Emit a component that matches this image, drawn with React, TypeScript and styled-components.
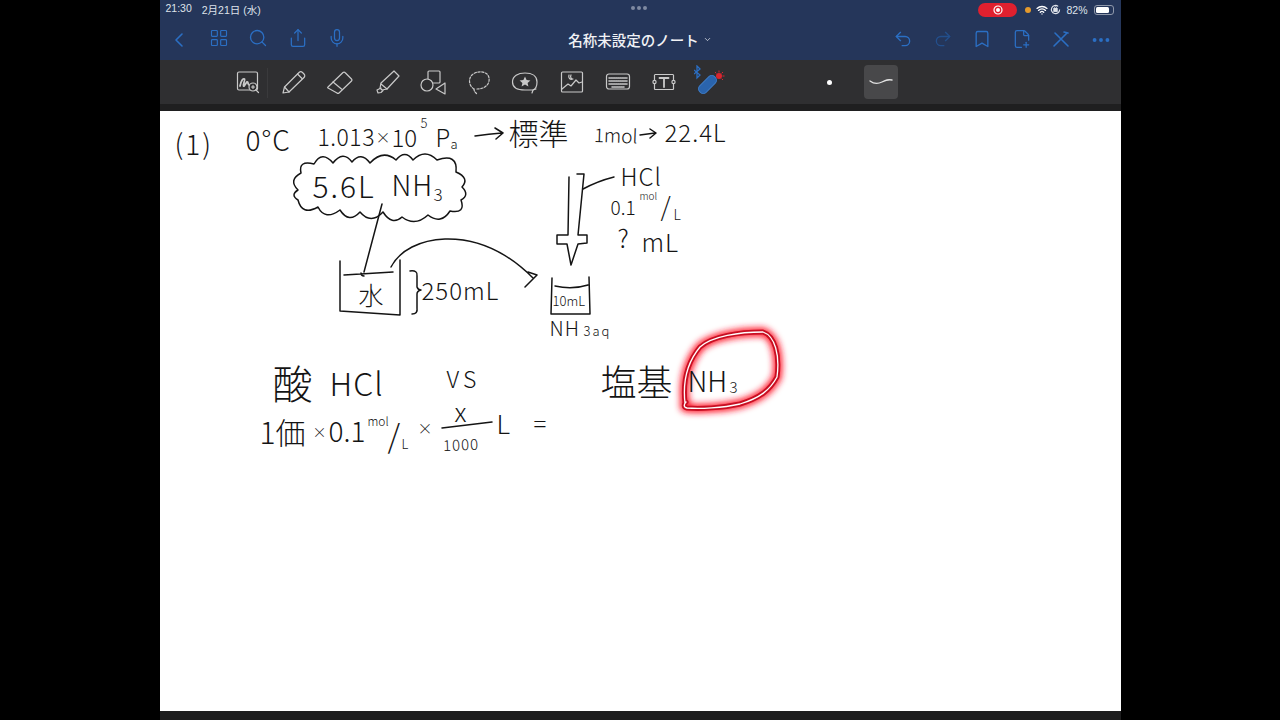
import React from 'react';
import styled, { createGlobalStyle } from 'styled-components';
import { ChevronLeft, ChevronDown, LayoutGrid, Search, Share, Mic, Undo2, Redo2, Bookmark, FilePlus2, Ellipsis, Wifi } from 'lucide-react';

const GlobalStyle = createGlobalStyle`
    html, body { margin: 0; height: 100%; background: #000; overflow: hidden; }
    #root { height: 100%; }
`;

const Page = styled.div`
    height: 720px;
    display: flex;
    justify-content: center;
    background: #000;
    font-family: "Noto Sans CJK JP", "Liberation Sans", sans-serif;
`;

const Tablet = styled.div`
    width: 961px;
    display: flex;
    flex-direction: column;
`;

const Header = styled.header`
    background: #25365a;
`;

const StatusBar = styled.div`
    position: relative;
    height: 19px;
    padding: 0 7px 0 6px;
    display: flex;
    align-items: center;
    justify-content: space-between;
    color: #dfe3ea;
    font: 10.5px "Liberation Sans", sans-serif;
`;

const Clock = styled.div`
    display: flex;
    gap: 10px;
    font-family: "Liberation Sans", "Noto Sans CJK JP", sans-serif;
`;

const GrabDots = styled.div`
    position: absolute;
    left: 471px;
    top: 6px;
    display: flex;
    gap: 2px;
    i { width: 4px; height: 4px; border-radius: 50%; background: #7f8aa1; }
`;

const StatusRight = styled.div`
    display: flex;
    align-items: center;
    gap: 5px;
`;

const RecordPill = styled.div`
    width: 39px;
    height: 14px;
    margin-right: 3px;
    border-radius: 7px;
    background: #e0202f;
    display: flex;
    align-items: center;
    justify-content: center;
`;

const OrangeDot = styled.span`
    width: 6px;
    height: 6px;
    border-radius: 50%;
    background: #e49a2c;
`;

const WifiMark = styled(Wifi)`
    margin-right: -3px;
`;

const Battery = styled.div`
    width: 20px;
    height: 10px;
    margin-left: 1px;
    padding: 1px;
    box-sizing: border-box;
    border: 1px solid #8f98aa;
    border-radius: 3px;
    &::before {
        content: '';
        display: block;
        width: 82%;
        height: 100%;
        border-radius: 1.5px;
        background: #fff;
    }
`;

const NavBar = styled.nav`
    height: 41px;
    display: grid;
    grid-template-columns: 1fr auto 1fr;
    align-items: center;
    color: #2b6fc4;
`;

const NavGroup = styled.div<{ $end?: boolean }>`
    display: flex;
    justify-content: ${p => (p.$end ? 'flex-end' : 'flex-start')};
`;

const NavButton = styled.div<{ $dim?: boolean }>`
    width: 39.5px;
    display: flex;
    justify-content: center;
    color: ${p => (p.$dim ? '#234f8c' : '#2b6fc4')};
`;

const Title = styled.div`
    display: flex;
    align-items: center;
    gap: 4px;
    color: #f1f2f5;
    font-size: 14.5px;
    font-weight: 500;
`;

const ToolBar = styled.div`
    height: 44px;
    padding-left: 65px;
    display: flex;
    align-items: center;
    background: #2f2f31;
    color: #c9c9c9;
`;

const Tool = styled.div<{ $divider?: boolean }>`
    position: relative;
    width: 46.3px;
    height: 44px;
    display: flex;
    align-items: center;
    justify-content: center;
    &::after {
        content: '';
        display: ${p => (p.$divider ? 'block' : 'none')};
        position: absolute;
        right: 3px;
        top: 8px;
        bottom: 6px;
        width: 1px;
        background: #3a3a3c;
    }
`;

const PenDot = styled.span`
    width: 5px;
    height: 5px;
    margin-left: 93px;
    border-radius: 50%;
    background: #fff;
`;

const PenWidth = styled.div`
    width: 34px;
    height: 34px;
    margin-left: 32px;
    border-radius: 4px;
    background: #48484a;
    display: flex;
    align-items: center;
    justify-content: center;
`;

const Shade = styled.div`
    height: 7px;
    background: #1f1f20;
`;

const Canvas = styled.main`
    position: relative;
    flex: 1;
    overflow: hidden;
    background: #fff;
`;

const Sketch = styled.svg`
    position: absolute;
    inset: 0;
    width: 100%;
    height: 100%;
    fill: none;
    stroke: #141414;
    stroke-width: 1.5;
    stroke-linecap: round;
    stroke-linejoin: round;
`;

const Ink = styled.span<{ $x: number; $y: number; $size: number; $rot?: number; $gap?: number }>`
    position: absolute;
    left: ${p => p.$x - 160}px;
    top: ${p => p.$y - 111}px;
    color: #141414;
    font-family: "Noto Sans CJK JP", "Open Sans", sans-serif;
    font-size: ${p => p.$size}px;
    font-weight: 300;
    line-height: 1;
    letter-spacing: ${p => p.$gap ?? 0}px;
    white-space: nowrap;
    transform: rotate(${p => p.$rot ?? 0}deg);
    transform-origin: left center;
`;

const BottomBar = styled.div`
    height: 9px;
    background: #1d1d1e;
`;

const Stroke = { fill: 'none', stroke: 'currentColor', strokeWidth: 1.2, strokeLinecap: 'round', strokeLinejoin: 'round' } as const;

const Icon = ({ children, size = 28 }: { children: React.ReactNode; size?: number }): JSX.Element => (
    <svg width={size} height={size} viewBox="0 0 28 28" {...Stroke}>{children}</svg>
);

const inkItems: Array<{ t: string; x: number; y: number; s: number; r?: number; g?: number }> = [
    { t: '(1)', x: 175, y: 129, s: 28, g: 2 },
    { t: '0°C', x: 246, y: 125, s: 28, g: 1 },
    { t: '1.013', x: 318, y: 125, s: 23, g: 0.5 },
    { t: '×', x: 376, y: 129, s: 15 },
    { t: '10', x: 392, y: 125, s: 24 },
    { t: '5', x: 421, y: 116, s: 13 },
    { t: 'P', x: 436, y: 125, s: 24 },
    { t: 'a', x: 451, y: 137, s: 13 },
    { t: '標準', x: 509, y: 117, s: 30 },
    { t: '1mol', x: 594, y: 124, s: 19, r: 2 },
    { t: '22.4L', x: 665, y: 120, s: 24, g: 1 },
    { t: '5.6L', x: 313, y: 170, s: 30, g: 2 },
    { t: 'NH', x: 392, y: 170, s: 28, g: 1 },
    { t: '3', x: 434, y: 185, s: 17 },
    { t: '水', x: 359, y: 282, s: 25 },
    { t: '250mL', x: 422, y: 278, s: 24, g: 1 },
    { t: '10mL', x: 553, y: 294, s: 13 },
    { t: 'NH', x: 550, y: 318, s: 20, g: 1 },
    { t: '3aq', x: 584, y: 324, s: 13, g: 2 },
    { t: 'HCl', x: 621, y: 164, s: 24, g: 1 },
    { t: '0.1', x: 611, y: 197, s: 19 },
    { t: 'mol', x: 640, y: 191, s: 10 },
    { t: '/', x: 661, y: 192, s: 26 },
    { t: 'L', x: 674, y: 207, s: 14 },
    { t: '?', x: 618, y: 225, s: 25 },
    { t: 'mL', x: 642, y: 229, s: 25, g: 1 },
    { t: '酸', x: 273, y: 362, s: 40 },
    { t: 'HCl', x: 330, y: 366, s: 32, g: 1 },
    { t: 'VS', x: 447, y: 367, s: 23, g: 4 },
    { t: '1価', x: 260, y: 416, s: 30 },
    { t: '×', x: 313, y: 424, s: 14 },
    { t: '0.1', x: 329, y: 416, s: 28 },
    { t: 'mol', x: 368, y: 415, s: 12 },
    { t: '/', x: 388, y: 418, s: 32 },
    { t: 'L', x: 402, y: 437, s: 13 },
    { t: '×', x: 418, y: 420, s: 15 },
    { t: 'x', x: 455, y: 398, s: 26 },
    { t: '1000', x: 443, y: 437, s: 15, g: 1, r: -2 },
    { t: 'L', x: 497, y: 410, s: 26 },
    { t: '=', x: 534, y: 411, s: 24 },
    { t: '塩基', x: 601, y: 362, s: 36 },
    { t: 'NH', x: 688, y: 366, s: 28 },
    { t: '3', x: 730, y: 379, s: 15 }
];

const ringPath = 'M685 403C683 385 685 365 700 347 712 336 740 332 763 332 775 336 780 355 777 377 770 390 760 398 740 404 722 408 700 409 687 408 683 407 684 404 686 402';

const App = (): JSX.Element => (
    <Page>
        <GlobalStyle />
        <Tablet>
            <Header>
                <StatusBar>
                    <Clock><span>21:30</span><span>2月21日 (水)</span></Clock>
                    <GrabDots><i /><i /><i /></GrabDots>
                    <StatusRight>
                        <RecordPill>
                            <svg width="12" height="12" viewBox="0 0 12 12">
                                <circle cx="6" cy="6" r="4" fill="none" stroke="#fff" strokeWidth="1.2" />
                                <circle cx="6" cy="6" r="2" fill="#fff" />
                            </svg>
                        </RecordPill>
                        <OrangeDot />
                        <WifiMark size={12} strokeWidth={2.6} color="#fff" />
                        <svg width="11" height="11" viewBox="0 0 12 12" fill="none" stroke="#dfe3ea" strokeWidth="1.2">
                            <path d="M10.5 6a4.5 4.5 0 1 1-1.6-3.4" />
                            <rect x="4.2" y="5" width="3.6" height="3" fill="#dfe3ea" />
                            <path d="M4.9 5V4a1.1 1.1 0 0 1 2.2 0v1" strokeWidth="0.8" />
                        </svg>
                        <span>82%</span>
                        <Battery />
                    </StatusRight>
                </StatusBar>
                <NavBar>
                    <NavGroup>
                        <NavButton><ChevronLeft size={24} strokeWidth={1.6} /></NavButton>
                        <NavButton><LayoutGrid size={20} strokeWidth={1.4} /></NavButton>
                        <NavButton><Search size={20} strokeWidth={1.6} /></NavButton>
                        <NavButton><Share size={20} strokeWidth={1.5} /></NavButton>
                        <NavButton><Mic size={20} strokeWidth={1.5} /></NavButton>
                    </NavGroup>
                    <Title>名称未設定のノート <ChevronDown size={9} strokeWidth={2} color="#dfe3ea" /></Title>
                    <NavGroup $end>
                        <NavButton><Undo2 size={20} strokeWidth={1.6} /></NavButton>
                        <NavButton $dim><Redo2 size={20} strokeWidth={1.6} /></NavButton>
                        <NavButton><Bookmark size={20} strokeWidth={1.6} /></NavButton>
                        <NavButton><FilePlus2 size={20} strokeWidth={1.5} /></NavButton>
                        <NavButton>
                            <svg width="20" height="20" viewBox="0 0 20 20" fill="none" stroke="currentColor" strokeWidth="1.6" strokeLinecap="round">
                                <path d="M3 17 16 4M4 4l13 13M13 3l4 1" />
                            </svg>
                        </NavButton>
                        <NavButton><Ellipsis size={22} strokeWidth={2.2} /></NavButton>
                    </NavGroup>
                </NavBar>
            </Header>
            <ToolBar>
                <Tool $divider>
                    <Icon>
                        <rect x="3.5" y="4" width="20" height="18" rx="1.5" />
                        <path d="M6 18c1-5 3-8 4.500-7 1 1-2 6-1 7s3-5 4-4 0 3 2 3" strokeWidth="1.8" />
                        <circle cx="19" cy="19" r="4" fill="#2f2f31" />
                        <path d="M22 22l2.500 2.500M17.500 19h3M19 17.500v3" />
                    </Icon>
                </Tool>
                <Tool>
                    <Icon>
                        <path d="M3 25l1.500-6L19 4.500c1-1 2.500-1 3.500 0l1.500 1.500c1 1 1 2.500 0 3.500L9 24z" />
                        <path d="M4.500 19 9 24M17.500 6l4.500 4.500" />
                    </Icon>
                </Tool>
                <Tool>
                    <Icon>
                        <path d="M2 19 17 4.500c.6-.6 1.500-.6 2 0l6.500 6.500c.6.6.6 1.400 0 2L13 25c-.6.6-1.400.6-2 0l-9-5c-.5-.3-.5-.7 0-1z" />
                        <path d="M7 14l8.500 7" />
                    </Icon>
                </Tool>
                <Tool>
                    <Icon>
                        <path d="M8 15 21 3l5 5-12 13-5 1-2-2z" />
                        <path d="M8 16l6 5M8 20l-4 2 1 3 3-.5 2-2" />
                    </Icon>
                </Tool>
                <Tool>
                    <Icon>
                        <rect x="9" y="3" width="12" height="12" rx="1" />
                        <circle cx="8" cy="17" r="6" fill="#2f2f31" />
                        <path d="M26 15v11l-9-5z" />
                    </Icon>
                </Tool>
                <Tool>
                    <Icon>
                        <path d="M9 21C4 18 3 11 7 7c4-4 11-4 15-1 3 3 3 9-1 12-3 3-7 3-10 3" strokeDasharray="2.200 1.600" />
                        <path d="M9 21c0 2 1 3 3 5" strokeDasharray="2 1.400" />
                    </Icon>
                </Tool>
                <Tool>
                    <Icon>
                        <path d="M22 22c2.500-1 4-3.500 4-8 0-6-5-9-12-9S1.500 8 1.500 14 6 22 14 22z" />
                        <path d="M14 8.500l1.600 3.500 3.800.4-2.800 2.500.8 3.700-3.400-2-3.400 2 .8-3.700-2.800-2.500 3.800-.4z" fill="currentColor" stroke="none" />
                        <path d="M21 25l1-3 3-1" />
                    </Icon>
                </Tool>
                <Tool>
                    <Icon>
                        <rect x="3.500" y="4" width="21" height="20" rx="1" />
                        <path d="M4 21l6-5 3 2 5-6 3 3 3-1" />
                        <path d="M11 7c-1 3 1 5 4 4-2 0-3-2-2-4" />
                    </Icon>
                </Tool>
                <Tool>
                    <Icon>
                        <rect x="2.500" y="6" width="23" height="15" rx="2.500" />
                        <path d="M5 10h18M5 13h18M5 16h18M8 19h12" strokeWidth="1.600" strokeDasharray="1.400 .8" />
                    </Icon>
                </Tool>
                <Tool>
                    <Icon>
                        <path d="M5 6.500h18M5 21.500h18M4.500 7v5M4.500 16v5M23.500 7v5M23.500 16v5" />
                        <circle cx="4.500" cy="14" r="1.600" />
                        <circle cx="23.500" cy="14" r="1.600" />
                        <path d="M9.500 10h9M14 10v9" strokeWidth="1.800" />
                    </Icon>
                </Tool>
                <Tool>
                    <svg width="34" height="34" viewBox="0 0 34 34" fill="none">
                        <path d="M0 5l6 5-3 3V1l3 3-6 5" stroke="#2b6fc4" strokeWidth="1.300" />
                        <rect x="3" y="15" width="21" height="9" rx="4" transform="rotate(-45 13.500 19.500)" fill="#2a64ad" stroke="#3d7cc8" />
                        <circle cx="25" cy="11" r="3" fill="#d8252f" />
                        <path d="M25 5.500v2M30.500 11h-2M29 7l-1.300 1.300M29 15l-1.300-1.300M21 7l1.300 1.300" stroke="#d8252f" strokeWidth="1" />
                    </svg>
                </Tool>
                <PenDot />
                <PenWidth>
                    <svg width="24" height="10" viewBox="0 0 24 10" fill="none">
                        <path d="M1 4c4 3 8 3 12 1s6-3 10-2" stroke="#e2e2e2" strokeWidth="1.300" strokeLinecap="round" />
                    </svg>
                </PenWidth>
            </ToolBar>
            <Shade />
            <Canvas>
                <Sketch viewBox="160 111 961 600">
                    <defs>
                        <filter id="glow" x="-30%" y="-30%" width="160%" height="160%">
                            <feGaussianBlur stdDeviation="3" />
                        </filter>
                    </defs>
                    <path d="M475 136q14-2 27-3M495 128l8 5-7 6M640 135l15-2M650 129l6 4-6 5" />
                    <path d="M298 190Q288 180 301 173 298 160 314 164 322 150 333 163 343 150 352 162 361 151 370 163 383 149 396 160 405 149 413 160 425 148 437 160 458 153 456 172 470 178 462 187 470 195 461 200 466 214 450 211 441 225 428 215 415 227 402 217 392 226 383 212 371 225 360 212 349 224 340 210 325 221 318 207 302 216 298 200 290 195 298 190Z" />
                    <path d="M382 204 364 272M361 273q0 3 3 3M340 261v50l60 4v-55M344 275l49-3" />
                    <path d="M410 271q8-1 7 5v11q1 3 4 3-4 1-4 4v14q1 6-5 6" />
                    <path d="M391 267C400 250 420 240 445 239 480 238 510 255 533 278M528 272l9 3-12 12" />
                    <path d="M569 177l-1 58h-11v9h10l4 21 7-21 9-1v-8h-9l6-61h-7" />
                    <path d="M583 189q15-8 31-12" />
                    <path d="M552 278l-1 36h39l-1-37M555 286q17 4 33-1" />
                    <path d="M442 428q25-3 50-6" />
                    <path d={ringPath} stroke="#ff1a2e" strokeWidth="9" filter="url(#glow)" />
                    <path d={ringPath} stroke="#c80f22" strokeWidth="5" />
                    <path d={ringPath} stroke="#fff" strokeWidth="1.300" />
                </Sketch>
                {inkItems.map((i, n) => (
                    <Ink key={n} $x={i.x} $y={i.y} $size={i.s} $rot={i.r} $gap={i.g}>{i.t}</Ink>
                ))}
            </Canvas>
            <BottomBar />
        </Tablet>
    </Page>
);

export default App;
